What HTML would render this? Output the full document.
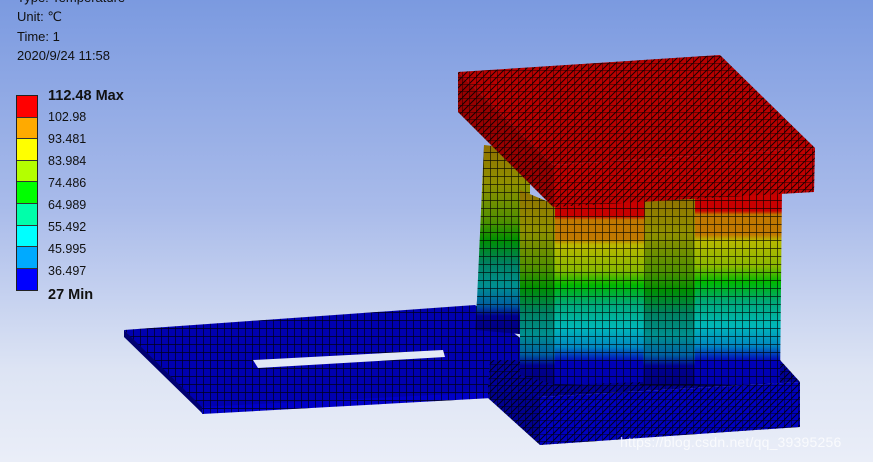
<!DOCTYPE html>
<html><head><meta charset="utf-8"><style>
html,body{margin:0;padding:0;}
body{width:873px;height:462px;overflow:hidden;position:relative;background:linear-gradient(#7b9ae0 0%,#a9bbea 45%,#dde4f4 80%,#eaeef8 100%);font-family:"Liberation Sans","DejaVu Sans",sans-serif;}
.t{position:absolute;left:17px;font-size:13px;color:#111;}
.lab{position:absolute;left:48px;font-size:12.5px;color:#111;}
.b{font-weight:bold;font-size:14.5px;}
.bar{position:absolute;left:16px;top:95px;width:20px;border:1px solid #222;}
.bar div{height:21.6px;border-bottom:1px solid #333;box-sizing:border-box;}
.wm{position:absolute;left:620px;top:434px;font-size:14px;color:rgba(255,255,255,0.75);letter-spacing:0.2px;}
</style></head><body>
<svg width="873" height="462" style="position:absolute;left:0;top:0">
<defs>
<pattern id="q" width="7" height="8" patternUnits="userSpaceOnUse"><path d="M0 0H7M0 0V8" stroke="#000" stroke-width="1.4" opacity=".85" fill="none"/></pattern>
<pattern id="tri" width="7" height="7" patternUnits="userSpaceOnUse"><path d="M0 0H7M0 0V7M0 7L7 0" stroke="#000" stroke-width="1" opacity=".85" fill="none"/></pattern>
<linearGradient id="g1" x1="0" y1="0" x2="0" y2="1">
<stop offset="0" stop-color="#c80000"/><stop offset=".12" stop-color="#c80000"/><stop offset=".14" stop-color="#c07800"/><stop offset=".24" stop-color="#c07800"/><stop offset=".27" stop-color="#b8b800"/><stop offset=".40" stop-color="#8ab800"/><stop offset=".48" stop-color="#00b800"/><stop offset=".58" stop-color="#00a878"/><stop offset=".70" stop-color="#00b8b8"/><stop offset=".80" stop-color="#0088c0"/><stop offset=".88" stop-color="#0000b8"/><stop offset="1" stop-color="#0000b0"/></linearGradient>
<linearGradient id="g2" x1="0" y1="0" x2="0" y2="1">
<stop offset="0" stop-color="#907000"/><stop offset=".2" stop-color="#909000"/><stop offset=".4" stop-color="#509000"/><stop offset=".5" stop-color="#009000"/><stop offset=".62" stop-color="#008060"/><stop offset=".74" stop-color="#009090"/><stop offset=".84" stop-color="#0060a0"/><stop offset=".9" stop-color="#000090"/><stop offset="1" stop-color="#000080"/></linearGradient>
</defs>
<polygon points="124,330 475,305 530,345 530,395 202,413" fill="#0000b0"/>
<polygon points="124,330 475,305 530,345 530,395 202,413" fill="url(#q)"/>
<polygon points="124,330 202,407 202,413 124,337" fill="#000070"/>
<polygon points="202,407 492,392 492,398 202,414" fill="#0000c8"/>
<polygon points="202,407 492,392 492,398 202,414" fill="url(#q)"/>
<polygon points="253,360 443,350 445,357 258,368" fill="#e2e8f6"/>
<polygon points="488,385 540,397 540,445 488,398" fill="#000090"/>
<polygon points="488,385 540,397 540,445 488,398" fill="url(#tri)"/>
<polygon points="490,360 780,360 800,382 540,397 488,390" fill="#000098"/>
<polygon points="490,360 780,360 800,382 540,397 488,390" fill="url(#tri)"/>
<polygon points="540,397 800,382 800,427 540,445" fill="#0000c0"/>
<polygon points="540,397 800,382 800,427 540,445" fill="url(#tri)"/>
<polygon points="484,145 530,150 530,335 475,330 477,300" fill="url(#g2)"/>
<polygon points="484,145 530,150 530,335 475,330 477,300" fill="url(#q)"/>
<polygon points="640,195 700,195 700,385 640,385" fill="url(#g2)"/>
<polygon points="640,195 700,195 700,385 640,385" fill="url(#q)"/>
<polygon points="520,190 556,205 556,385 520,375" fill="url(#g2)"/>
<polygon points="520,190 556,205 556,385 520,375" fill="url(#q)"/>
<polygon points="555,195 645,193 643,382 555,385" fill="url(#g1)"/>
<polygon points="555,195 645,193 643,382 555,385" fill="url(#q)"/>
<polygon points="656,195 696,195 696,385 656,385" fill="url(#g2)"/>
<polygon points="656,195 696,195 696,385 656,385" fill="url(#q)"/>
<polygon points="695,190 782,187 780,383 695,385" fill="url(#g1)"/>
<polygon points="695,190 782,187 780,383 695,385" fill="url(#q)"/>
<polygon points="458,72 720,55 815,148 553,165" fill="#b80000"/>
<polygon points="458,72 720,55 815,148 553,165" fill="url(#tri)"/>
<polygon points="458,72 553,165 553,207 458,112" fill="#980000"/>
<polygon points="458,72 553,165 553,207 458,112" fill="url(#tri)"/>
<polygon points="553,165 815,148 814,192 553,207" fill="#c00000"/>
<polygon points="553,165 815,148 814,192 553,207" fill="url(#tri)"/>
</svg>
<div class="t" style="top:-10px">Type: Temperature</div>
<div class="t" style="top:9px">Unit: ℃</div>
<div class="t" style="top:29px">Time: 1</div>
<div class="t" style="top:48px">2020/9/24 11:58</div>
<div class="bar">
<div style="background:#ff0000"></div><div style="background:#ffaa00"></div><div style="background:#ffff00"></div><div style="background:#b4ff00"></div><div style="background:#00ff00"></div><div style="background:#00ffaa"></div><div style="background:#00ffff"></div><div style="background:#00aaff"></div><div style="background:#0000ff;border-bottom:none"></div>
</div>
<div class="lab b" style="top:88px">112.48 Max</div>
<div class="lab" style="top:110px">102.98</div>
<div class="lab" style="top:132px">93.481</div>
<div class="lab" style="top:154px">83.984</div>
<div class="lab" style="top:176px">74.486</div>
<div class="lab" style="top:198px">64.989</div>
<div class="lab" style="top:220px">55.492</div>
<div class="lab" style="top:242px">45.995</div>
<div class="lab" style="top:264px">36.497</div>
<div class="lab b" style="top:287px">27 Min</div>
<div class="wm">https://blog.csdn.net/qq_39395256</div>
</body></html>
